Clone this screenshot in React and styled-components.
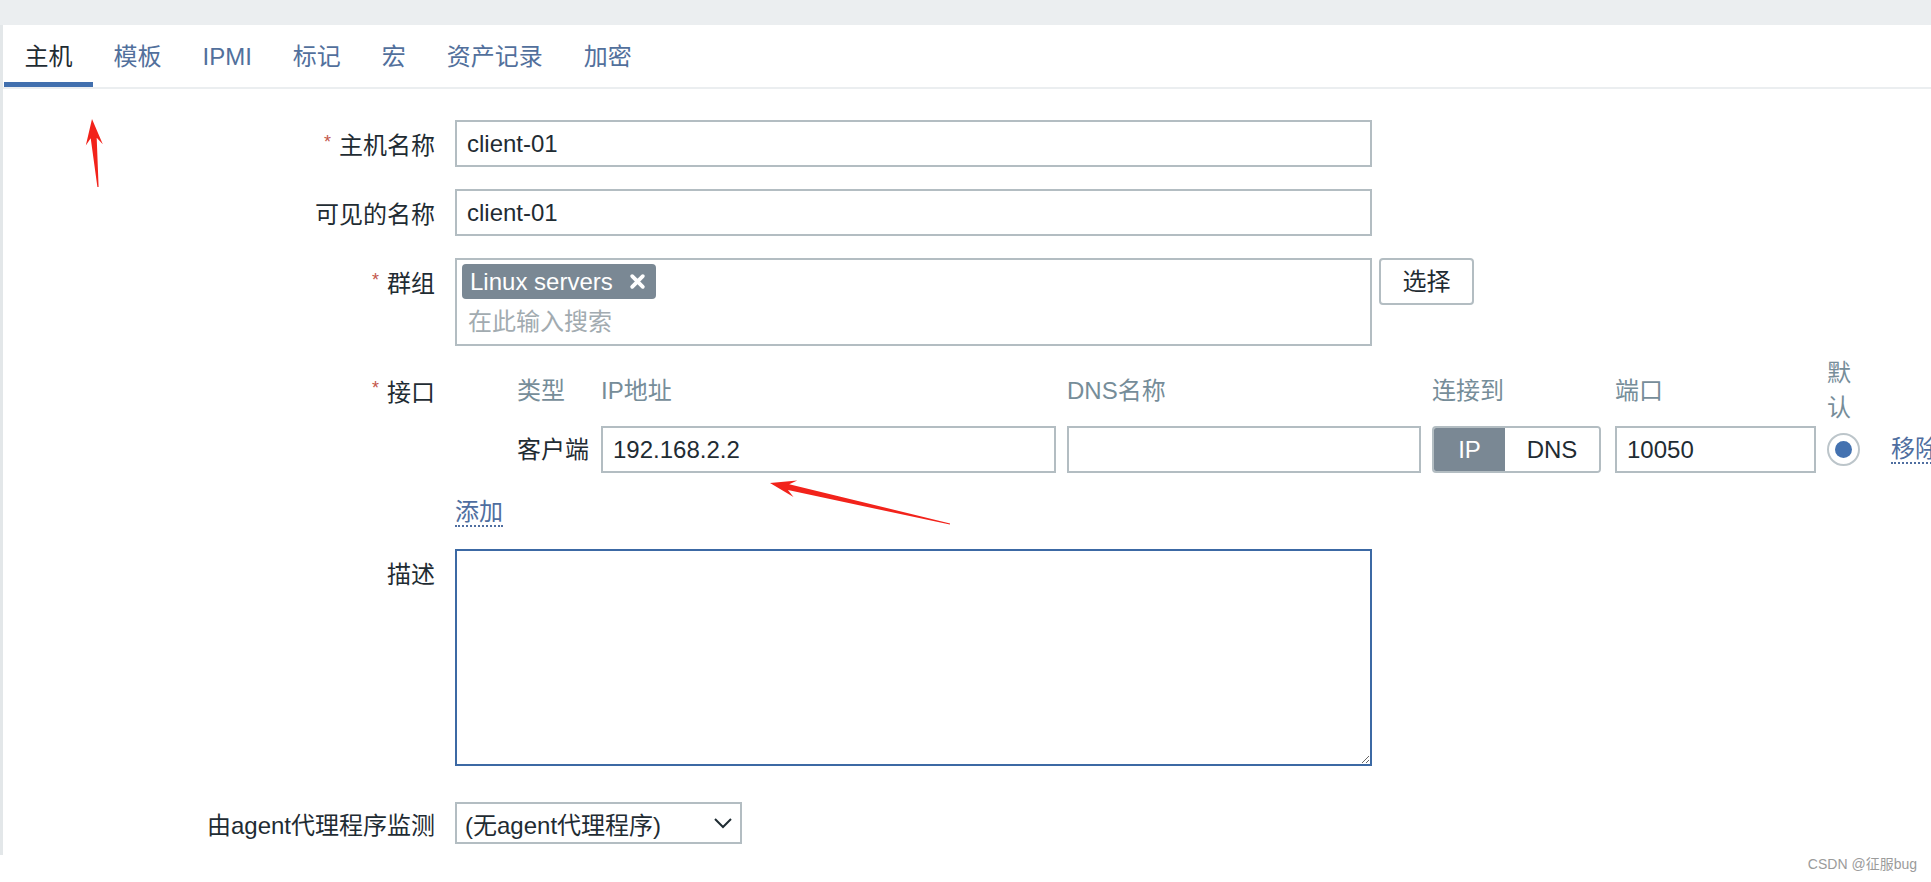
import React from "react";
import styled, { createGlobalStyle } from "styled-components";

const GlobalStyle = createGlobalStyle`
  html, body {
    margin: 0;
    padding: 0;
    overflow: hidden;
    background: #fff;
  }
  body {
    font-family: "Liberation Sans", Arial, "Noto Sans CJK SC", sans-serif;
    color: #1f2c33;
  }
`;

const Page = styled.div`
  position: relative;
  width: 1931px;
  height: 882px;
  overflow: hidden;
  background: #fff;
`;

const TopBar = styled.div`
  height: 25px;
  background: #ebeef0;
`;

const Panel = styled.div`
  height: 830px;
  border-left: 3px solid #e3e7e9;
  background: #fff;
`;

const TabBar = styled.ul`
  display: flex;
  margin: 0;
  padding: 0 0 0 1px;
  list-style: none;
  border-bottom: 2px solid #ebeef0;
`;

const Tab = styled.li`
  height: 24px;
  padding: 20px 20.5px 13px;
  font-size: 24px;
  line-height: 24px;
  white-space: nowrap;
  color: ${(p) => (p.$active ? "#1f2c33" : "#52709c")};
  border-bottom: 5px solid ${(p) => (p.$active ? "#416fae" : "transparent")};
`;

const Row = styled.div`
  display: flex;
  align-items: flex-start;
  margin-top: ${(p) => p.$top}px;
`;

const Label = styled.div`
  flex: 0 0 432px;
  height: ${(p) => p.$lh || 47}px;
  margin-right: 20px;
  display: flex;
  align-items: center;
  justify-content: flex-end;
  font-size: 24px;
  color: #1f2c33;
  white-space: nowrap;
`;

const Star = styled.span`
  color: #c3564a;
  font-size: 18px;
  line-height: 18px;
  margin: 0 8px 4px 0;
`;

const Field = styled.div`
  display: flex;
  flex-direction: column;
  align-items: flex-start;
`;

const TextInput = styled.div`
  box-sizing: border-box;
  width: ${(p) => p.$w || 917}px;
  height: 47px;
  padding: 0 10px;
  border: 2px solid #b3bdc2;
  background: #fff;
  font-size: 24px;
  line-height: 43px;
  color: #1f2c33;
  white-space: nowrap;
`;

const MultiRow = styled.div`
  display: flex;
  align-items: flex-start;
  gap: 7px;
`;

const MultiSelect = styled.div`
  box-sizing: border-box;
  width: 917px;
  height: 88px;
  padding: 4px 5px;
  border: 2px solid #b3bdc2;
`;

const TagChip = styled.span`
  display: inline-flex;
  align-items: center;
  height: 35px;
  padding: 0 10px 0 8px;
  border-radius: 4px;
  background: #7a8894;
  color: #fff;
  font-size: 24px;
  gap: 16px;
`;

const Placeholder = styled.div`
  height: 35px;
  margin-top: 5px;
  padding-left: 6px;
  font-size: 24px;
  line-height: 35px;
  color: #a2abb0;
`;

const Button = styled.div`
  box-sizing: border-box;
  width: 95px;
  height: 47px;
  border: 2px solid #b3bdc2;
  border-radius: 4px;
  background: #fff;
  font-size: 24px;
  line-height: 43px;
  text-align: center;
  color: #1f2c33;
`;

const IfaceGrid = styled.div`
  display: grid;
  width: max-content;
  grid-template-columns: 51px 73px 455px 354px 172px 201px 41px max-content;
  grid-template-rows: 70px 47px;
  column-gap: 11px;
  row-gap: 1px;
  align-items: center;
`;

const HeadCell = styled.div`
  font-size: 24px;
  line-height: 35px;
  color: #768d99;
  white-space: ${(p) => (p.$wrap ? "normal" : "nowrap")};
`;

const TypeCell = styled.div`
  font-size: 24px;
  line-height: 47px;
  height: 47px;
  white-space: nowrap;
`;

const Toggle = styled.div`
  display: flex;
  box-sizing: border-box;
  width: 169px;
  height: 47px;
  border: 2px solid #b3bdc2;
  border-radius: 4px;
  overflow: hidden;
`;

const ToggleOpt = styled.div`
  flex: ${(p) => (p.$on ? "0 0 71px" : "1")};
  background: ${(p) => (p.$on ? "#7a8894" : "#fff")};
  color: ${(p) => (p.$on ? "#fff" : "#1f2c33")};
  font-size: 24px;
  line-height: 43px;
  text-align: center;
`;

const Radio = styled.div`
  box-sizing: border-box;
  width: 33px;
  height: 33px;
  border: 2px solid #bcc5ca;
  border-radius: 50%;
  display: flex;
  align-items: center;
  justify-content: center;
  &::after {
    content: "";
    width: 17px;
    height: 17px;
    border-radius: 50%;
    background: #4472b0;
  }
`;

const Link = styled.span`
  display: inline-block;
  height: 26px;
  font-size: 24px;
  line-height: 26px;
  color: #4f6ea0;
  border-bottom: 2px dotted #4f6ea0;
  white-space: nowrap;
  margin-top: ${(p) => p.$top || 0}px;
  margin-left: ${(p) => p.$left || 0}px;
`;

const TextArea = styled.textarea`
  box-sizing: border-box;
  width: 917px;
  height: 217px;
  border: 2px solid #3c69a4;
  outline: none;
  resize: both;
  margin: 0;
  font-family: inherit;
  font-size: 24px;
`;

const Select = styled.div`
  box-sizing: border-box;
  width: 287px;
  height: 42px;
  padding: 0 6px 0 8px;
  border: 2px solid #b3bdc2;
  display: flex;
  align-items: center;
  justify-content: space-between;
  font-size: 24px;
  color: #1f2c33;
  white-space: nowrap;
`;

const Overlay = styled.svg`
  position: absolute;
  left: 0;
  top: 0;
  pointer-events: none;
`;

const Watermark = styled.div`
  position: absolute;
  right: 14px;
  bottom: 10px;
  font-size: 14px;
  line-height: 16px;
  color: #9b9b9b;
`;

// tapered red annotation arrow, tail -> tip
const arrowPoints = (x1, y1, x2, y2) => {
  const dx = x2 - x1;
  const dy = y2 - y1;
  const len = Math.hypot(dx, dy);
  const ux = dx / len;
  const uy = dy / len;
  const nx = -uy;
  const ny = ux;
  const head = 26;
  const bx = x2 - ux * head;
  const by = y2 - uy * head;
  const cx = x2 - ux * (head - 7);
  const cy = y2 - uy * (head - 7);
  const pts = [
    [x1 + nx * 0.6, y1 + ny * 0.6],
    [cx + nx * 3, cy + ny * 3],
    [bx + nx * 8.5, by + ny * 8.5],
    [x2, y2],
    [bx - nx * 8.5, by - ny * 8.5],
    [cx - nx * 3, cy - ny * 3],
    [x1 - nx * 0.6, y1 - ny * 0.6],
  ];
  return pts.map((p) => p.map((v) => v.toFixed(1)).join(",")).join(" ");
};

const tabs = ["主机", "模板", "IPMI", "标记", "宏", "资产记录", "加密"];

const App = () => {
  return (
    <Page>
      <GlobalStyle />
      <TopBar />
      <Panel>
        <TabBar>
          {tabs.map((t, i) => (
            <Tab key={t} $active={i === 0}>
              {t}
            </Tab>
          ))}
        </TabBar>

        <Row $top={31}>
          <Label>
            <Star>*</Star>主机名称
          </Label>
          <TextInput>client-01</TextInput>
        </Row>

        <Row $top={22}>
          <Label>可见的名称</Label>
          <TextInput>client-01</TextInput>
        </Row>

        <Row $top={22}>
          <Label>
            <Star>*</Star>群组
          </Label>
          <MultiRow>
            <MultiSelect>
              <TagChip>
                Linux servers
                <svg width="17" height="17" viewBox="0 0 16 16">
                  <path
                    d="M3 3 L13 13 M13 3 L3 13"
                    stroke="#fff"
                    strokeWidth="3.6"
                    strokeLinecap="round"
                  />
                </svg>
              </TagChip>
              <Placeholder>在此输入搜索</Placeholder>
            </MultiSelect>
            <Button>选择</Button>
          </MultiRow>
        </Row>

        <Row $top={9}>
          <Label $lh={70}>
            <Star>*</Star>接口
          </Label>
          <Field>
            <IfaceGrid>
              <div />
              <HeadCell>类型</HeadCell>
              <HeadCell>IP地址</HeadCell>
              <HeadCell>DNS名称</HeadCell>
              <HeadCell>连接到</HeadCell>
              <HeadCell>端口</HeadCell>
              <HeadCell $wrap>默认</HeadCell>
              <div />

              <div />
              <TypeCell>客户端</TypeCell>
              <TextInput $w={455}>192.168.2.2</TextInput>
              <TextInput $w={354} />
              <Toggle>
                <ToggleOpt $on>IP</ToggleOpt>
                <ToggleOpt>DNS</ToggleOpt>
              </Toggle>
              <TextInput $w={201}>10050</TextInput>
              <Radio />
              <Link $left={12}>移除</Link>
            </IfaceGrid>
            <Link $top={26}>添加</Link>
          </Field>
        </Row>

        <Row $top={22}>
          <Label>描述</Label>
          <TextArea defaultValue="" />
        </Row>

        <Row $top={36}>
          <Label $lh={42}>由agent代理程序监测</Label>
          <Select>
            (无agent代理程序)
            <svg width="22" height="14" viewBox="0 0 22 14">
              <path
                d="M3 3 L11 11 L19 3"
                fill="none"
                stroke="#1f2c33"
                strokeWidth="2"
              />
            </svg>
          </Select>
        </Row>
      </Panel>

      <Overlay width="1931" height="882">
        <polygon points={arrowPoints(98, 187, 92, 119)} fill="#f2231b" />
        <polygon points={arrowPoints(950, 524, 770, 483)} fill="#f2231b" />
      </Overlay>

      <Watermark>CSDN @征服bug</Watermark>
    </Page>
  );
};

export default App;
